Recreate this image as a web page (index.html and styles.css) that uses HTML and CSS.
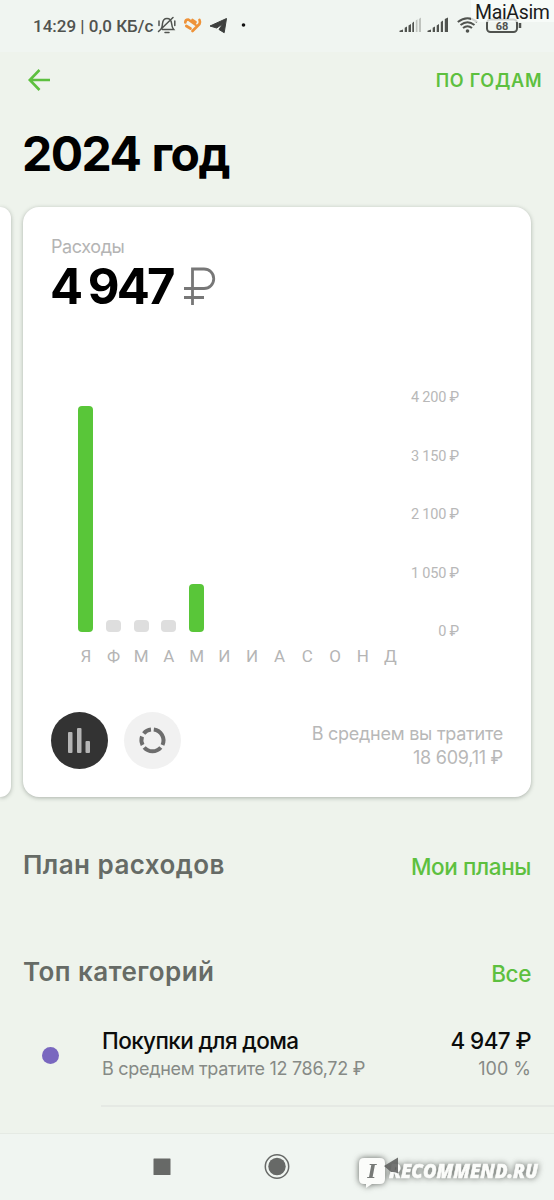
FILE: index.html
```html
<!DOCTYPE html>
<html lang="ru">
<head>
<meta charset="utf-8">
<title>2024 год</title>
<link rel="stylesheet" href="styles.css">
</head>
<body>
<div class="screen">
  <header class="status">
    <span class="status-time">14:29 | 0,0 КБ/с</span>
    <svg class="status-left" width="94" height="22" viewBox="156 14 94 22">
      <g fill="none" stroke="#50534f" stroke-width="1.500" stroke-linecap="round">
        <path d="M161 29c1.300-1.500 1.300-3 1.500-5.500.3-3 2-5 4.500-5s4.300 2 4.600 5c.2 2.500.4 4 2.100 6H162.500M173 17.500L158.500 31.500M165 32.500h4M159 21v4.500M174.800 21v4.500"/>
      </g>
      <g stroke="#ee9238" stroke-width="2.700" stroke-linecap="round" stroke-linejoin="round" fill="none">
        <path d="M185.300 22.500q0-3 3-3l7 5M186.300 26l4.200 2.500M192.500 20l3 2M192.500 31l7-7q1-2 0-4"/>
      </g>
      <path d="M210 26l16.500-7.500-2.300 14.200-5.200-3.200 4-6-6.300 4.500z" fill="#3d3f3d" stroke="#3d3f3d" stroke-linejoin="round"/>
      <circle cx="243.500" cy="25" r="1.800" fill="#111"/>
    </svg>
    <svg class="status-right" width="124" height="22" viewBox="398 14 124 22">
      <g fill="#50534f">
        <path d="M399.500 32v-1.300l3.500-1.300V32zM404.700 32v-4.300l2.300-1.200V32zM408.500 32v-6.500l2.500-1.500v8zM412.300 32V23l1.700-1.500V32z"/>
        <path d="M415.800 32V20.500l1.700-1.200V32zM418.900 32V19l2.100-1.500V32z" fill="#bfc3be"/>
        <path d="M427.500 32v-1.300l3.500-1.300V32zM432.700 32v-4.300l2.300-1.200V32zM436.700 32v-6.500l2.300-1.500v8zM440.800 32V22l2.200-1.500V32zM444.800 32V19l3.200-1.500V32z"/>
        <circle cx="467.500" cy="31" r="1.800"/>
      </g>
      <g fill="none" stroke="#50534f" stroke-width="2">
        <path d="M463 28q4.500-3.500 9 0M460.500 25q7-5.500 14 0"/><path d="M457.800 22q9.700-7.500 19.400 0"/>
        <rect x="487" y="19.500" width="30" height="12.500" rx="3.500"/><path d="M520 23v5" stroke-width="2.500"/>
      </g>
      <text x="502" y="30.300" text-anchor="middle" class="battery">68</text>
    </svg>
    <span class="author">MaiAsim</span>
  </header>

  <nav class="topbar">
    <svg class="back" width="24" height="24" viewBox="0 0 24 24"><path d="M12.500 2L2.800 12l9.700 10M2.800 12H23" fill="none" stroke="#5dc03f" stroke-width="2.600"/></svg>
    <span class="by-year">ПО ГОДАМ</span>
  </nav>
  <h1 class="title">2024 год</h1>

  <main class="carousel">
    <div class="card-prev"></div>
    <section class="card">
      <div class="label">Расходы</div>
      <div class="total"><span class="sum">4 947</span><svg class="rub" width="34" height="40" viewBox="0 0 34 40"><path d="M9.500 38V2H21a9.700 9.700 0 0 1 0 19.500H1M1 30.500H21" fill="none" stroke="#777" stroke-width="2.800"/></svg></div>
      <div class="chart">
        <div class="plot">
          <div class="bars">
            <i class="bar" style="height:226px"></i><i class="bar empty"></i><i class="bar empty"></i><i class="bar empty"></i><i class="bar" style="height:48px"></i>
          </div>
          <div class="months"><span>Я</span><span>Ф</span><span>М</span><span>А</span><span>М</span><span>И</span><span>И</span><span>А</span><span>С</span><span>О</span><span>Н</span><span>Д</span></div>
        </div>
        <div class="axis"><span>4 200 ₽</span><span>3 150 ₽</span><span>2 100 ₽</span><span>1 050 ₽</span><span>0 ₽</span></div>
      </div>
      <footer class="card-foot">
        <span class="round dark"><svg width="57" height="57" viewBox="0 0 57 57"><g fill="#b5b5b5"><rect x="17" y="20" width="4.500" height="21" rx="1"/><rect x="26" y="16" width="4.500" height="25" rx="1"/><rect x="34.500" y="29" width="4.500" height="12" rx="1"/></g></svg></span>
        <span class="round"><svg width="57" height="57" viewBox="0 0 57 57"><g fill="none" stroke="#6d6d6d" stroke-width="4"><path d="M29.800 17.600A11 11 0 0 1 38.500 33M36.800 35.500A11 11 0 0 1 20.200 35.500M18.600 33A11 11 0 0 1 18 24.500M19.700 21.500A11 11 0 0 1 27 17.600"/></g></svg></span>
        <div class="average"><div class="avg-a">В среднем вы тратите</div><div class="avg-b">18 609,11 ₽</div></div>
      </footer>
    </section>
  </main>

  <section class="row plans"><h2 class="h-plan">План расходов</h2><span class="link link-plan">Мои планы</span></section>
  <section class="row tops"><h2 class="h-top">Топ категорий</h2><span class="link link-all">Все</span></section>
  <section class="item">
    <i class="dot"></i>
    <div class="item-body">
      <div class="line name"><span class="n-a">Покупки для дома</span><span class="n-b">4 947 ₽</span></div>
      <div class="line sub"><span class="s-a">В среднем тратите 12 786,72 ₽</span><span class="s-b">100 %</span></div>
    </div>
  </section>

  <footer class="sysbar">
    <svg width="554" height="67" viewBox="0 1133 554 67">
      <rect x="153.500" y="1158.500" width="17" height="16.500" rx=".5" fill="#676967"/>
      <circle cx="277" cy="1166.500" r="11.700" fill="none" stroke="#676967" stroke-width="1.500"/><circle cx="277" cy="1166.500" r="8.700" fill="#676967"/>
      <g class="mark">
        <path d="M364 1158h16q5 0 5 5v16q0 5-5 5h-8l-6 4v-4h-2q-5 0-5-5v-16q0-5 5-5z" fill="#fbfcfa"/>
        <text x="372" y="1178" text-anchor="middle" class="mark-i">I</text>
        <text x="389" y="1178" class="mark-text" textLength="149" lengthAdjust="spacingAndGlyphs">RECOMMEND.RU</text>
      </g>
      <path d="M384 1166l14-8.500v16q-2-2-7-1.500z" fill="#5a5c5a" opacity=".85"/>
    </svg>
  </footer>
</div>
</body>
</html>
```
FILE: styles.css
```css
* { box-sizing: border-box; }
body { margin: 0; background: #eef3ec; font-family: Inter, "Noto Sans", sans-serif; }
.screen { width: 554px; height: 1200px; overflow: hidden; position: relative; display: flex; flex-direction: column; }
h1, h2 { margin: 0; }
span { white-space: nowrap; }

.status { height: 52px; flex: none; display: flex; align-items: flex-start; padding: 14px 0 0 33px; background: #f0f5f1; }
.status-time { font: 500 17px/24px Roboto, sans-serif; color: #50534f; width: 123px; }
.status-right { margin-left: 148px; }
.battery { font: 700 11px Roboto, sans-serif; fill: #50534f; }
.author { position: absolute; right: 0; top: 0; height: 22px; width: 83px; padding-left: 4px; font: 400 19.500px/26px Roboto, sans-serif; letter-spacing: -.35px; color: #1c1c1c; background: rgba(250, 252, 250, .75); }

.topbar { height: 56px; flex: none; display: flex; justify-content: space-between; align-items: center; padding: 0 12px 0 26.500px; }
.by-year { font-size: 18px; font-weight: 600; letter-spacing: .75px; margin-right: -.25px; color: #5dc03f; }
.title { height: 99px; flex: none; padding-left: 22px; font-size: 48px; line-height: 92px; font-weight: 700; letter-spacing: -1.500px; word-spacing: 1px; color: #000; }

.carousel { height: 590px; flex: none; display: flex; gap: 12px; }
.card-prev, .card { background: #fff; box-shadow: 0 1px 4px rgba(70, 80, 70, .4); }
.card-prev { width: 11px; border-radius: 0 16px 16px 0; }
.card { width: 508px; border-radius: 16px; padding: 28px 28px 0; display: flex; flex-direction: column; }
.label { height: 23px; line-height: 23px; font-size: 18px; letter-spacing: -.4px; color: #b4b4b4; }
.total { height: 58px; display: flex; align-items: center; }
.sum { font-size: 49px; line-height: 56px; font-weight: 700; letter-spacing: -2.800px; word-spacing: -1.500px; margin-left: -1px; width: 133px; }
.rub { margin-top: -1px; }

.chart { height: 396px; display: flex; padding: 80px 44px 0 21px; justify-content: space-between; }
.plot { width: 333px; padding-top: 10px; }
.bars { height: 226px; display: flex; align-items: flex-end; gap: 12.900px; padding-left: 6.400px; }
.bar { width: 14.800px; border-radius: 4px; background: #59c639; }
.empty { height: 12px; background: #dedede; }
.months { display: flex; margin-top: 12px; font: 400 17px/24px Roboto, sans-serif; color: #b5b5b5; }
.months span { width: 27.700px; text-align: center; flex: none; }
.axis { margin-top: -7px; font: 400 14.500px/18px Roboto, sans-serif; letter-spacing: -.2px; color: #b8b8b8; display: flex; flex-direction: column; gap: 40.600px; text-align: right; }

.card-foot { height: 57px; display: flex; align-items: center; }
.round { width: 57px; height: 57px; border-radius: 50%; background: #f1f1f1; margin-right: 16px; }
.dark { background: #333; }
.average { margin-left: auto; text-align: right; font-size: 18px; line-height: 24px; letter-spacing: -.25px; color: #b8b8b8; padding-top: 10px; }

.row { flex: none; display: flex; justify-content: space-between; align-items: flex-start; padding: 0 23px; }
.row h2 { font-size: 26px; line-height: 36px; font-weight: 600; letter-spacing: .45px; color: #666b66; }
.link { font-size: 22.500px; line-height: 40px; font-weight: 500; letter-spacing: -.4px; color: #5dc03f; }
.plans { margin-top: 50px; height: 107px; }
.tops { height: 70px; }
.item { height: 83px; flex: none; display: flex; padding-left: 42px; }
.dot { width: 17px; height: 17px; border-radius: 50%; background: #7967bf; margin-top: 23px; }
.item-body { margin-left: 42px; width: 453px; padding: 0 23px 0 1px; border-bottom: 2px solid #e5e9e4; }
.line { display: flex; justify-content: space-between; }
.name { font-size: 22.500px; font-weight: 500; line-height: 34px; letter-spacing: -.6px; color: #0b0c0b; }
.sub { font-size: 18px; line-height: 22px; color: #868a86; }
.s-a { letter-spacing: -.3px; }
.s-b { letter-spacing: 0; }

.sysbar { position: absolute; left: 0; top: 1133px; height: 67px; background: #f0f5f1; border-top: 1px solid #e5eae4; }
.sysbar svg { display: block; margin-top: -1px; }
.mark { filter: drop-shadow(0 0 3px rgba(80, 84, 80, .9)); }
.mark-i { font: italic 900 19px "DejaVu Serif", serif; fill: #777a77; }
.mark-text { font: italic 800 19px "Open Sans", sans-serif; fill: #fbfcfa; stroke: #fbfcfa; stroke-width: .5px; }
```
